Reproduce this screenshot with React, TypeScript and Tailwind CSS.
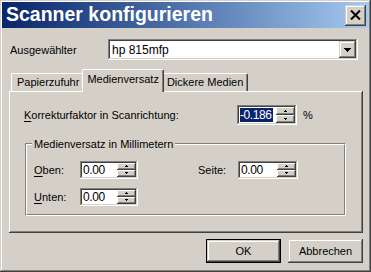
import React from 'react';

const raised =
  'shadow-[inset_-1px_-1px_#404040,inset_1px_1px_#d4d0c8,inset_-2px_-2px_#808080,inset_2px_2px_#ffffff]';
const sunken =
  'shadow-[inset_-1px_-1px_#ffffff,inset_1px_1px_#808080,inset_-2px_-2px_#d4d0c8,inset_2px_2px_#404040]';

const Arrow = ({ up }: { up?: boolean }) => (
  <svg width="5" height="3" viewBox="0 0 5 3" shapeRendering="crispEdges" className="block">
    <path d={up ? 'M2 0h1v1h1v1H1V1h1z' : 'M1 0h3v1H3v1H2V1H1z'} fill="#000" />
  </svg>
);

const SpinHalf = ({ up }: { up?: boolean }) => (
  <div className="flex-1 flex items-center justify-center bg-[#d4d0c8] shadow-[inset_-1px_-1px_#404040,inset_1px_1px_#ffffff,inset_-2px_-2px_#808080]">
    <Arrow up={up} />
  </div>
);

const Spin = ({
  value,
  className,
  selected,
}: {
  value: string;
  className: string;
  selected?: boolean;
}) => (
  <div className={`flex bg-white p-[2px] ${sunken} ${className}`}>
    <div className="flex-1 flex items-center pl-[1px] text-[12px] tracking-[-0.4px] leading-none">
      {selected ? (
        <span className="bg-[#0a246a] text-white py-[1px] pr-[1px]">{value}</span>
      ) : (
        value
      )}
    </div>
    <div className="flex flex-col w-[19px]">
      <SpinHalf up />
      <SpinHalf />
    </div>
  </div>
);

const U = ({ children }: { children: React.ReactNode }) => (
  <span className="underline underline-offset-2">{children}</span>
);

export default function App() {
  return (
    <div
      className={`w-[371px] h-[272px] bg-[#d4d0c8] p-[2px] flex flex-col font-['Liberation_Sans',Arial,sans-serif] text-[11px] text-black ${raised}`}
    >
      {/* title bar */}
      <div className="h-[26px] flex items-center justify-between bg-linear-to-r from-[#0a246a] to-[#a6caf0] pl-[4px] pr-[3px]">
        <span className="text-white font-bold text-[19.5px] leading-none">
          Scanner konfigurieren
        </span>
        <div className={`w-[21px] h-[21px] bg-[#d4d0c8] flex items-center justify-center ${raised}`}>
          <svg width="11" height="10" viewBox="0 0 11 10">
            <path d="M1 0.5l9 9M10 0.5l-9 9" stroke="#000" strokeWidth="2" />
          </svg>
        </div>
      </div>

      {/* scanner selection */}
      <div className="flex items-start mt-[11px] pl-[8px]">
        <span className="w-[98px] pt-[3px]">Ausgewählter</span>
        <div className={`w-[250px] h-[21px] bg-white p-[2px] flex ${sunken}`}>
          <div className="flex-1 flex items-center pl-[2px] text-[12px]">hp 815mfp</div>
          <div className={`w-[17px] bg-[#d4d0c8] flex items-center justify-center ${raised}`}>
            <svg width="7" height="4" viewBox="0 0 7 4" shapeRendering="crispEdges">
              <path d="M0 0h7L3.5 4z" fill="#000" />
            </svg>
          </div>
        </div>
      </div>

      {/* tabs */}
      <div className="ml-[7px] mt-[9px] w-[354px]">
        <div className="flex items-end h-[22px] pl-[2px]">
          <div className="h-[18px] pl-[5px] pr-[4px] flex items-center border-t border-l border-white border-r border-r-[#404040] rounded-tl-[2px] rounded-tr-[2px]">
            Papierzufuhr
          </div>
          <div className="relative z-10 -mx-[2px] -mb-[1px] h-[23px] px-[4px] pb-[3px] flex items-center bg-[#d4d0c8] border-t border-l border-white border-r border-r-[#404040] rounded-tl-[2px] rounded-tr-[2px] shadow-[inset_-1px_0_#808080]">
            Medienversatz
          </div>
          <div className="h-[18px] px-[4px] flex items-center border-t border-l border-white border-r border-r-[#404040] rounded-tl-[2px] rounded-tr-[2px] shadow-[inset_-1px_0_#808080]">
            Dickere Medien
          </div>
        </div>
        <div className="h-[142px] pt-[14px] pl-[15px] pr-[16px] flex flex-col shadow-[inset_-1px_-1px_#404040,inset_1px_1px_#ffffff,inset_-2px_-2px_#808080]">
          <div className="flex items-center h-[20px]">
            <span className="w-[213px]">
              <U>K</U>orrekturfaktor in Scanrichtung:
            </span>
            <Spin value="-0.186" className="w-[60px] h-[20px]" selected />
            <span className="ml-[6px]">%</span>
          </div>

          {/* group box */}
          <div className="relative mt-[18px] ml-[1px] w-[321px] h-[73px] border-t border-l border-[#808080] border-r border-b border-r-white border-b-white">
            <div className="h-full border-t border-l border-white border-r border-b border-r-[#808080] border-b-[#808080] pt-[16px] pl-[7px] flex flex-col gap-[9px]">
              <div className="flex items-center h-[18px]">
                <span className="w-[46px]">
                  <U>O</U>ben:
                </span>
                <Spin value="0.00" className="w-[58px] h-[18px]" />
                <span className="ml-[60px] w-[40px]">Seite:</span>
                <Spin value="0.00" className="w-[60px] h-[18px]" />
              </div>
              <div className="flex items-center h-[18px]">
                <span className="w-[46px]">
                  <U>U</U>nten:
                </span>
                <Spin value="0.00" className="w-[58px] h-[18px]" />
              </div>
            </div>
            <span className="absolute -top-[8px] left-[6px] px-[2px] bg-[#d4d0c8]">
              Medienversatz in Millimetern
            </span>
          </div>
        </div>
      </div>

      {/* buttons */}
      <div className="flex justify-end gap-[7px] mt-[6px] pr-[6px]">
        <div className="w-[75px] h-[24px] border border-black">
          <div className={`w-full h-full flex items-center justify-center ${raised}`}>OK</div>
        </div>
        <div className={`w-[75px] h-[24px] flex items-center justify-center ${raised}`}>
          Abbrechen
        </div>
      </div>
    </div>
  );
}
